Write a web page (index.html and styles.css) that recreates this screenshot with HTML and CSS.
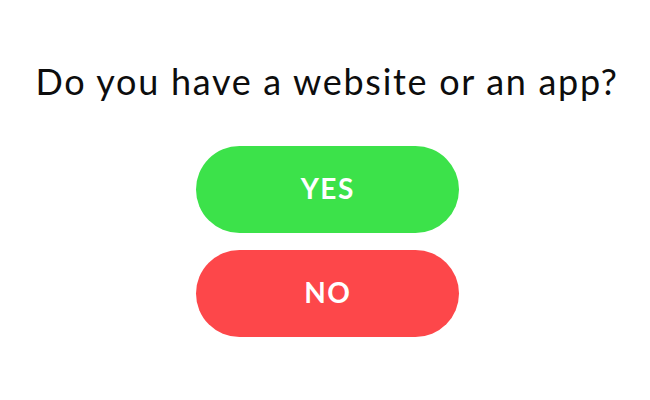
FILE: index.html
```html
<!DOCTYPE html>
<html>
<head>
<meta charset="utf-8">
<link rel="stylesheet" href="styles.css">
</head>
<body>
<main class="page">
  <h1 class="question">Do you have a website or an app?</h1>
  <div class="choices">
    <button class="choice choice-yes">YES</button>
    <button class="choice choice-no">NO</button>
  </div>
</main>
</body>
</html>
```
FILE: styles.css
```css
html, body {
  margin: 0;
  padding: 0;
  background: #ffffff;
}
.page {
  width: 650px;
  height: 400px;
  display: flex;
  flex-direction: column;
  align-items: center;
  padding-top: 59px;
  box-sizing: border-box;
  padding-left: 4px;
}
.question {
  margin: 0;
  font-family: Lato, "Noto Sans", sans-serif;
  font-weight: 400;
  font-size: 36px;
  letter-spacing: 1.7px;
  line-height: 44px;
  color: #0d0d0d;
  white-space: nowrap;
}
.choices {
  margin-top: 43px;
  display: flex;
  flex-direction: column;
  gap: 17px;
}
.choice {
  width: 263px;
  height: 87px;
  border: none;
  border-radius: 44px;
  color: #ffffff;
  font-family: Lato, "Noto Sans", sans-serif;
  font-weight: 700;
  font-size: 28px;
  letter-spacing: 1.5px;
  padding: 0 0 4px 1.5px;
  cursor: pointer;
}
.choice-yes { background: #3ce24a; }
.choice-no { background: #fd474a; }
```
